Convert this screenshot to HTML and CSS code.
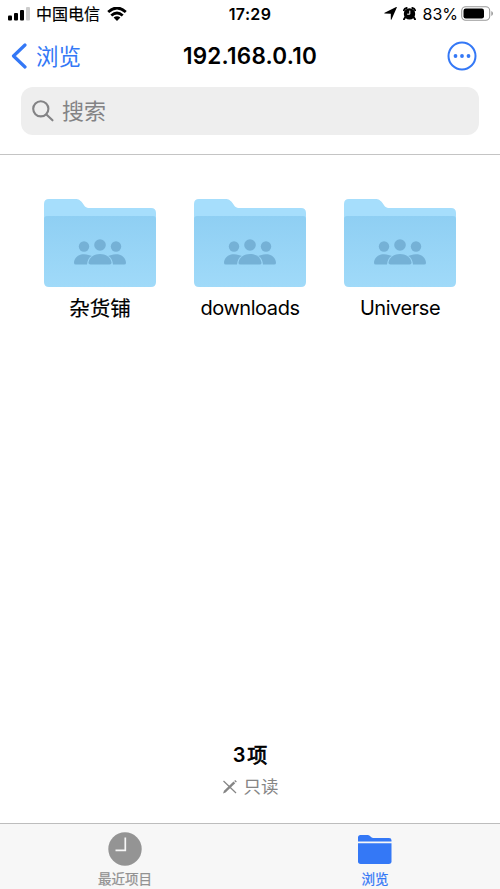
FILE: index.html
```
<!DOCTYPE html>
<html lang="zh-CN">
<head>
<meta charset="utf-8">
<title>192.168.0.10</title>
<link rel="stylesheet" href="styles.css">
</head>
<body>
<svg class="defs" width="0" height="0" aria-hidden="true">
  <defs>
    <linearGradient id="front" x1="0" y1="0" x2="0" y2="1">
      <stop offset="0" stop-color="#8fcff3"/>
      <stop offset="1" stop-color="#a0daf9"/>
    </linearGradient>
    <symbol id="folder" viewBox="0 0 112 88">
      <path fill="#a6defc" d="M5 0H31C35 0 36.500 1.500 38.500 4C40.500 7 41.500 9 46 9H107Q112 9 112 14V40H0V5Q0 0 5 0Z"/>
      <path fill="url(#front)" d="M0 20Q0 17 3 17H109Q112 17 112 20V83Q112 88 107 88H5Q0 88 0 83Z"/>
      <g fill="#75b1d6">
        <circle cx="40" cy="47.500" r="5.200"/>
        <circle cx="72" cy="47.500" r="5.200"/>
        <circle cx="56" cy="46" r="5.800"/>
        <path d="M45.500 56.200C36 53 30 58 30 64Q30 65.500 32 65.500H43C43.500 61 45 58 48 57Z"/>
        <path d="M66.500 56.200C76 53 82 58 82 64Q82 65.500 80 65.500H69C68.500 61 67 58 64 57Z"/>
        <path d="M44.500 63.500C45.500 58 50 55 56 55S66.500 58 67.500 63.500Q67.800 65.500 65.500 65.500H46.500Q44.200 65.500 44.500 63.500Z"/>
      </g>
    </symbol>
  </defs>
</svg>
<div class="screen">
  <header class="header">
    <div class="status">
      <div class="status-left">
        <svg width="22" height="14" viewBox="0 0 22 14">
          <rect x="0" y="8.500" width="4" height="5" rx="1"/>
          <rect x="6" y="6" width="4" height="7.500" rx="1"/>
          <rect x="12" y="3" width="4" height="10.500" rx="1"/>
          <rect x="18" y="0" width="4" height="13.500" rx="1" fill="#ccc"/>
        </svg>
        <span class="carrier">中国电信</span>
        <svg width="20" height="14" viewBox="0 0 20 14">
          <g fill="none" stroke="#000" stroke-width="2.800">
            <path d="M1.200 5Q10-3 18.800 5"/>
            <path d="M4.300 8.500Q10 3.500 15.700 8.500"/>
          </g>
          <path d="M6.600 10.500Q10 7.800 13.400 10.500L10 14Z"/>
        </svg>
      </div>
      <div class="time">17:29</div>
      <div class="status-right">
        <svg width="13" height="13" viewBox="0 0 13 13"><path d="M12.800.4L7.500 12.600Q7 13 6.800 12.400V6.700L.7 6.500Q0 6.300.6 5.800L12.200.1Q13-.2 12.800.4Z"/></svg>
        <svg class="alarm" width="13" height="13" viewBox="0 0 13 13">
          <circle cx="6.500" cy="6.900" r="5.700"/>
          <path d="M2.200 10.200L1 12.300M10.800 10.200L12 12.300M.9 3.200Q1.500 1.400 3.700 1M12.100 3.200Q11.500 1.400 9.300 1" fill="none" stroke="#000" stroke-width="1.900" stroke-linecap="round"/>
          <path d="M6.800 3.600V7.200H4.200" fill="none" stroke="#fff" stroke-width="1"/>
        </svg>
        <span class="percent">83%</span>
        <svg width="32" height="15" viewBox="0 0 32 15">
          <rect x=".7" y=".7" width="28" height="13.600" rx="4" fill="none" stroke="#999" stroke-width="1.100"/>
          <rect x="2.500" y="2.500" width="20.500" height="10" rx="2.200"/>
          <path d="M30.300 5Q32 5.700 32 7.500T30.300 10Z" fill="#999"/>
        </svg>
      </div>
    </div>
    <nav class="nav">
      <div class="back">
        <svg width="16" height="26" viewBox="0 0 16 26"><path d="M14 2L2.500 13L14 24" fill="none" stroke="#3478f6" stroke-width="3.200" stroke-linecap="round" stroke-linejoin="round"/></svg>
        <span>浏览</span>
      </div>
      <h1 class="title">192.168.0.10</h1>
      <svg class="more" width="30" height="30" viewBox="0 0 30 30">
        <circle cx="15" cy="15" r="13.500" fill="none" stroke="#3478f6" stroke-width="2"/>
        <g fill="#3478f6"><circle cx="8.500" cy="15" r="1.900"/><circle cx="15" cy="15" r="1.900"/><circle cx="21.500" cy="15" r="1.900"/></g>
      </svg>
    </nav>
    <div class="search">
      <svg width="22" height="22" viewBox="0 0 22 22" fill="none" stroke="#838385" stroke-width="2.100" stroke-linecap="round"><circle cx="8.800" cy="8.800" r="7.600"/><path d="M14.400 14.400L20.500 20.300"/></svg>
      <span>搜索</span>
    </div>
  </header>
  <main class="files">
    <div class="item"><svg width="112" height="88"><use href="#folder"/></svg><span class="cjk-name">杂货铺</span></div>
    <div class="item"><svg width="112" height="88"><use href="#folder"/></svg><span>downloads</span></div>
    <div class="item"><svg width="112" height="88"><use href="#folder"/></svg><span>Universe</span></div>
  </main>
  <section class="summary">
    <div class="count">3<span class="unit">项</span></div>
    <div class="readonly">
      <svg width="16" height="14" viewBox="0 0 16 14"><path d="M1.500 1L14 13" stroke="#858585" stroke-width="1.200"/><path d="M1 13.500L2 10.800L11.500 1.500L13.200 3.200L3.600 12.500Z" fill="#858585"/><path d="M12.200.9L13.200 0L14.800 1.600L13.900 2.500Z" fill="#858585"/></svg>
      <span>只读</span>
    </div>
  </section>
  <footer class="tabs">
    <div class="tab">
      <svg width="34" height="34" viewBox="0 0 34 34"><circle cx="17" cy="17" r="16.700" fill="#949494"/><path d="M17.300 5.500V18.300H7.500" fill="none" stroke="#f7f7f7" stroke-width="1.700"/></svg>
      <span>最近项目</span>
    </div>
    <div class="tab active">
      <svg width="34" height="34" viewBox="0 0 34 34" fill="#3478f6"><path d="M0 8.200V5.500Q0 3 2.500 3H9.500Q11 3 12 4L13 5Q14 6 15.500 6H31Q33.500 6 33.500 8.200V9.500H0Z"/><path d="M0 11.200H33.500V29.300Q33.500 32 30.800 32H2.700Q0 32 0 29.300Z"/></svg>
      <span>浏览</span>
    </div>
  </footer>
</div>
</body>
</html>
```
FILE: styles.css
```
* {
  box-sizing: border-box;
}

body {
  margin: 0;
  background: #fff;
  color: #000;
  font-family: Inter, "Noto Sans CJK SC", sans-serif;
}

svg {
  display: block;
  flex: none;
}

.defs {
  position: absolute;
}

.screen {
  display: flex;
  flex-direction: column;
  width: 500px;
  height: 889px;
  overflow: hidden;
}

.header {
  height: 155px;
  border-bottom: 1px solid #c4c4c4;
}

.status {
  display: grid;
  grid-template-columns: 1fr auto 1fr;
  align-items: center;
  height: 27px;
  padding: 0 8px 0 8px;
}

.status-left,
.status-right {
  display: flex;
  align-items: center;
}

.status-right {
  justify-content: flex-end;
  margin-right: -1px;
}

.carrier {
  margin: 1px 7px 0 6px;
  font-size: 16px;
  line-height: 20px;
  -webkit-text-stroke: 0.2px;
}

.time {
  font-size: 16px;
  font-weight: 600;
  letter-spacing: 0.35px;
}

.alarm {
  margin: 0 7px 0 6px;
}

.percent {
  margin-right: 3px;
  font-size: 16px;
}

.nav {
  display: grid;
  grid-template-columns: 1fr auto 1fr;
  align-items: center;
  height: 58px;
  padding: 0 23px 0 11px;
}

.back {
  display: flex;
  align-items: center;
  gap: 9px;
  color: #3478f6;
  font-size: 22.500px;
  line-height: 30px;
}

.back span {
  padding-top: 2px;
}

.title {
  margin: 0 0 0 12px;
  font-size: 22.500px;
  font-weight: 600;
  letter-spacing: 0.23px;
  line-height: 30px;
}

.more {
  justify-self: end;
}

.search {
  display: flex;
  align-items: center;
  gap: 8px;
  height: 48px;
  margin: 2px 21px 0;
  padding-left: 11px;
  border-radius: 12px;
  background: #eee;
  color: #838385;
  font-size: 22px;
  line-height: 30px;
}

.files {
  display: grid;
  grid-template-columns: repeat(3, 150px);
  justify-content: center;
  flex: 1;
  align-content: start;
  padding-top: 43.500px;
}

.item {
  display: flex;
  flex-direction: column;
  align-items: center;
  gap: 6px;
  font-size: 20px;
  letter-spacing: -0.45px;
  line-height: 30px;
}

.cjk-name {
  padding-top: 1px;
  font-size: 20.500px;
  letter-spacing: 0;
  -webkit-text-stroke: 0.2px;
}

.summary {
  display: flex;
  flex-direction: column;
  align-items: center;
  height: 83px;
}

.count {
  display: flex;
  gap: 2px;
  font-size: 20px;
  font-weight: 600;
  line-height: 30px;
}

.unit {
  font-weight: 400;
  padding-top: 1px;
  -webkit-text-stroke: 0.7px;
}

.readonly {
  display: flex;
  align-items: center;
  gap: 6px;
  margin-top: 3px;
  color: #858585;
  font-size: 17.500px;
  line-height: 26px;
}

.tabs {
  display: grid;
  grid-template-columns: 1fr 1fr;
  height: 66px;
  padding-top: 8px;
  border-top: 1px solid #bdbdbd;
  background: #f7f7f7;
}

.tab {
  display: flex;
  flex-direction: column;
  align-items: center;
  gap: 4px;
  color: #929292;
  font-size: 13.500px;
  line-height: 18px;
  -webkit-text-stroke: 0.25px;
}

.active {
  color: #3478f6;
}
```
